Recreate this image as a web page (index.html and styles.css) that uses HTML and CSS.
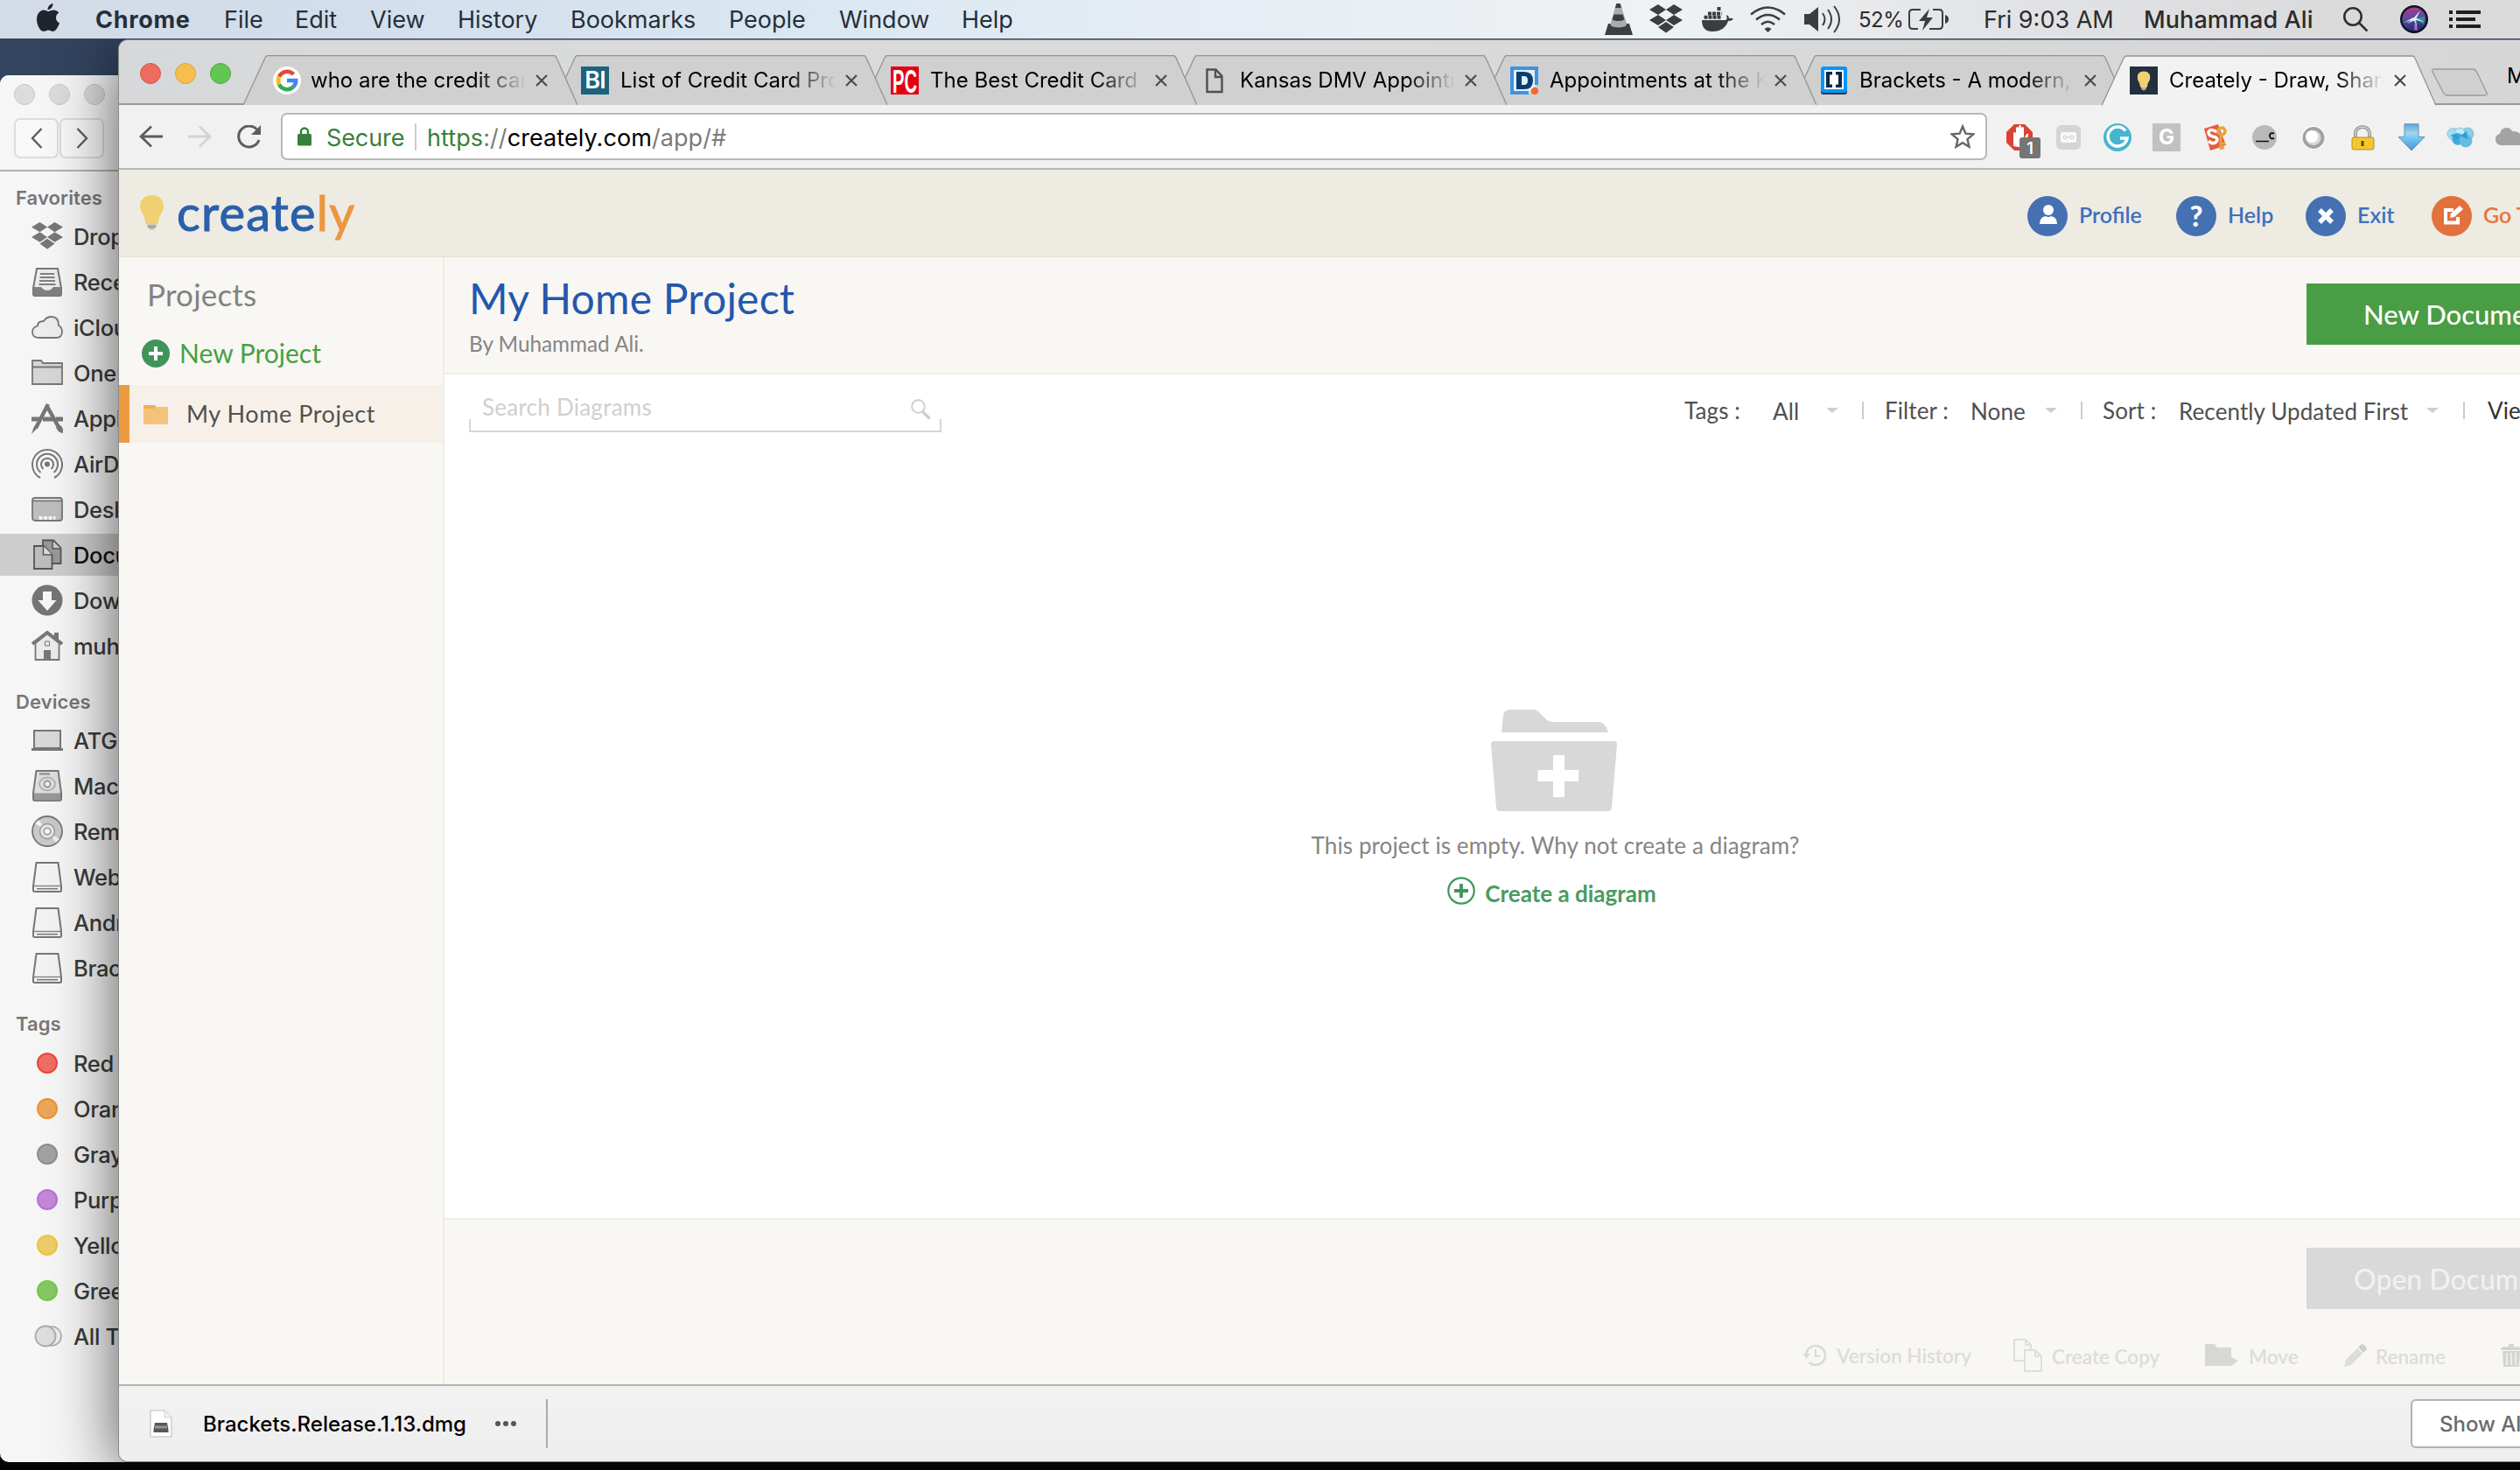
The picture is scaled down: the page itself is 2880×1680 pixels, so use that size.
FILE: index.html
```html
<!DOCTYPE html>
<html lang="en">
<head>
<meta charset="utf-8">
<title>Creately - Draw, Share</title>
<link rel="stylesheet" href="styles.css">
</head>
<body>
<svg width="0" height="0" class="defs">
  <defs>
    <symbol id="dropbox" viewBox="0 0 38 34"><path d="M10 0l9 6-9 6-10-6zM28 0l10 6-10 6-9-6zM0 18l10-6 9 6-9 6zM38 18l-10-6-9 6 9 6zM19 20l9 6-9 6.500-9-6.500z" fill="currentColor"/></symbol>
    <symbol id="disk" viewBox="0 0 36 36"><path d="M5.500 2h25l3.500 26.500v5q0 1.500-2 1.500H4q-2 0-2-1.500v-5z" fill="#f2f2f2" fill-opacity=".7" stroke="#777" stroke-width="2"/><path d="M3 28.500h30" stroke="#888" stroke-width="1.500"/><path d="M6 31.700h24" stroke="#777" stroke-width="1.500"/></symbol>
    <symbol id="tab" viewBox="0 0 382 57"><path d="M0 57L25 3q1-2.500 3-2.500H355q2 0 3 2.500L382 57z" fill="currentColor"/><path d="M0 57L25 3q1-2.500 3-2.500H355q2 0 3 2.500L382 57" fill="none" stroke="#939393" stroke-width="1.300"/></symbol>
    <symbol id="close" viewBox="0 0 14 14"><path d="M1 1l12 12M13 1L1 13" stroke="#4c4c4c" stroke-width="2.200"/></symbol>
    <symbol id="bulb" viewBox="0 0 27 40"><path d="M13.500 0C6 0 0 5 0 12.500c0 7 5 9 6 18 .3 2.500 1.300 3 2.500 3h10c1.200 0 2.200-.5 2.500-3 1-9 6-11 6-18C27 5 21 0 13.500 0z" fill="#f1cf73"/><path d="M8.500 33.500h10v2.500l-3 3.500h-4l-3-3.500z" fill="#b9b9b4"/><path d="M8.500 36h10" stroke="#888" stroke-width=".8"/></symbol>
  </defs>
</svg>

<header class="menubar">
  <svg class="apple" width="26" height="33" viewBox="0 0 26 33"><path d="M18.500 0c.3 3.600-2.900 7.300-6 7.200C12.200 3.700 15.300.4 18.500 0z" fill="#20242d"/><path d="M13 9c1.500 0 3.500-1.600 6.300-1.600 2.300 0 4.600 1.200 5.900 3.200-4.800 2.900-4.100 9.800.8 11.800-.9 2.600-3.900 9.200-7.100 9.400-2.300.1-3-1.400-5.600-1.400s-3.500 1.400-5.600 1.400C3.500 31.700 0 24 0 18.300 0 11.500 4 7.600 7.900 7.500 10.300 7.500 12 9 13 9z" fill="#20242d"/></svg>
  <nav class="menus"><b>Chrome</b><span>File</span><span>Edit</span><span>View</span><span>History</span><span>Bookmarks</span><span>People</span><span>Window</span><span>Help</span></nav>
  <div class="status">
    <svg width="32" height="36" viewBox="0 0 32 36"><path d="M13 0h5l9.500 31h-23z" fill="#a9abad"/><path d="M13.500 0h4l1.500 5h-7zM10.500 12.500h10l2 6q-7 3-14 0z" fill="#3c3d3f"/><path d="M4 23h2.500q-1 4 9.500 4.500Q26 27 25 23h3l4 13H0z" fill="#3c3d3f"/></svg>
    <svg width="38" height="34" class="s-drop"><use href="#dropbox"/></svg>
    <svg width="36" height="28" viewBox="0 0 36 28" class="s-dock"><path d="M0 15h27q2.500-.5 1-6 3 1 3 4 3-.6 5 .5-1.500 2.500-6 2.500Q26 28 12 28 0 28 0 15z" fill="#3c3d3f"/><path d="M2.500 11.700h20M7 7.400h15.500M17.500 2h4" stroke="#3c3d3f" stroke-width="4" stroke-dasharray="4 1"/></svg>
    <svg width="41" height="30" viewBox="0 0 41 30" class="s-wifi" fill="none" stroke="#3c3d3f" stroke-width="2.600"><path d="M1 9.500q19.500-16 39 0M7 15.500q13.500-11 27 0M13 21q7.500-6.500 15 0"/><path d="M16.500 26q4-3.500 8 0l-4 4z" fill="#3c3d3f" stroke="none"/></svg>
    <svg width="41" height="32" viewBox="0 0 41 32" class="s-vol"><path d="M0 10h6l10-8v28L6 22H0z" fill="#3c3d3f"/><path d="M21 9q5 7 0 14M27 5q8 11 0 22M34 1q12 15 0 30" fill="none" stroke="#3c3d3f" stroke-width="2"/></svg>
    <span class="pct">52%</span>
    <svg width="46" height="26" viewBox="0 0 46 26" class="s-bat"><path d="M14 2H5Q1 2 1 6v14q0 4 4 4h6M28 2h7q4 0 4 4v14q0 4-4 4H24" fill="none" stroke="#3c3d3f" stroke-width="2"/><path d="M42 8q4 1 4 5t-4 5z" fill="#3c3d3f"/><path d="M24 1L12 15h7l-3 11 12-15h-7z" fill="#3c3d3f"/></svg>
    <span class="clock">Fri 9:03 AM</span>
    <span class="user">Muhammad Ali</span>
    <svg width="28" height="28" viewBox="0 0 28 28" class="s-find" fill="none" stroke="#2e2e2e" stroke-width="2.600"><circle cx="11" cy="11" r="9.700"/><path d="M18 18l9.500 9.500"/></svg>
    <svg width="32" height="32" viewBox="0 0 32 32" class="s-siri"><defs><linearGradient id="sg" x1=".4" y1="0" x2=".6" y2="1"><stop offset="0" stop-color="#b8368f"/><stop offset=".45" stop-color="#5b4a9c"/><stop offset="1" stop-color="#142a6c"/></linearGradient></defs><circle cx="16" cy="16" r="14.800" fill="url(#sg)" stroke="#0d1222" stroke-width="2.400"/><path d="M17 15l11-2-1 9z" fill="#1fbf9e" opacity=".65"/><path d="M4 20l10-5.500 2-.5L23 6l-4.500 9L28 19l-10-2 1.500 10-3.500-9.500L8 21l5-4z" fill="#d6f6f8"/><path d="M17 17l3 12-4-1z" fill="#d86fc0" opacity=".8"/></svg>
    <svg width="36" height="20" viewBox="0 0 36 20" class="s-list"><path d="M0 2h4M8 2h28M0 10h4M8 10h22M0 18h4M8 18h28" stroke="#1e1e1e" stroke-width="4"/></svg>
  </div>
</header>

<section class="finder">
  <div class="f-top">
    <div class="f-lights"><i></i><i></i><i></i></div>
    <div class="f-nav"><span><svg width="14" height="24" viewBox="0 0 14 24"><path d="M12.500 1L2 12l10.500 11" fill="none" stroke="#5c5c5c" stroke-width="2.400"/></svg></span><span><svg width="14" height="24" viewBox="0 0 14 24"><path d="M1.500 1L12 12 1.500 23" fill="none" stroke="#5c5c5c" stroke-width="2.400"/></svg></span></div>
  </div>
  <h4>Favorites</h4>
  <ul>
    <li><svg viewBox="0 0 38 34"><use href="#dropbox"/></svg>Dropbox</li>
    <li><svg viewBox="0 0 36 36"><path d="M6 3h24l4 22v7q0 2-2 2H4q-2 0-2-2v-7z" fill="#ececec" stroke="#777" stroke-width="2"/><path d="M2 24h9q3 4 7 4t7-4h9v8q0 2-2 2H4q-2 0-2-2z" fill="#808080"/><path d="M10 9h16M9.500 13h17M9 17h18M8.500 21h19" stroke="#808080" stroke-width="1.800"/></svg>Recents</li>
    <li><svg viewBox="0 0 36 36"><path d="M9 30Q1 30 1 23.500 1 18 7 16.500 7 11 14 11 17 6 23 6q8 0 8 10 4 2 4 7 0 7-7 7z" fill="#ededed" stroke="#777" stroke-width="1.800"/></svg>iCloud Drive</li>
    <li><svg viewBox="0 0 36 36"><path d="M1 31V4h10l2 3h22v24z" fill="#d6d6d6" stroke="#777" stroke-width="1.800"/><path d="M1 11.500h34" stroke="#777" stroke-width="1.800"/></svg>OneDrive</li>
    <li><svg viewBox="0 0 36 36"><path d="M0 19h9M13 19h12M28 19h8" stroke="#777" stroke-width="5"/><path d="M19 2L5 29M17 3l14 25" stroke="#777" stroke-width="4.500"/><path d="M3 27l4 2-7 7zM28 28l5-2q4 3 3 9-6 0-8-7z" fill="#777"/></svg>Applications</li>
    <li><svg viewBox="0 0 36 36" fill="none" stroke="#777" stroke-width="2"><path d="M10 34a17 17 0 1 1 16 0M10.500 28a12 12 0 1 1 15 0M13.500 24a7 7 0 1 1 9 0"/><circle cx="18" cy="18.500" r="2" fill="#777"/></svg>AirDrop</li>
    <li><svg viewBox="0 0 36 36"><rect x="1" y="5" width="34" height="26" rx="3" fill="#bdbdbd" stroke="#777" stroke-width="1.800"/><path d="M2 8.500h32" stroke="#777" stroke-width="1.500"/><path d="M3 6.700h30" stroke="#eee"/><path d="M8.500 28h19" stroke="#f4f4f4" stroke-width="4" stroke-dasharray="4 1.500"/></svg>Desktop</li>
    <li class="sel"><svg viewBox="0 0 36 36"><path d="M13 1.500h12l8.500 8.500V28H13z" fill="#999" stroke="#555" stroke-width="1.800"/><path d="M24 2v9h9.500" fill="#ccc" stroke="#555" stroke-width="1.500"/><path d="M3 8h11l9.500 10v16H3z" fill="#bdbdbd" stroke="#555" stroke-width="1.800"/><path d="M13.500 8v10h10" fill="#ddd" stroke="#555" stroke-width="1.500"/></svg>Documents</li>
    <li><svg viewBox="0 0 36 36"><circle cx="18" cy="18" r="17.500" fill="#757575"/><path d="M13 8h10v10h5.500L18 30 7.500 18H13z" fill="#f7f7f7"/></svg>Downloads</li>
    <li><svg viewBox="0 0 36 36"><path d="M4.500 15v19h27V15L18 4z" fill="#ebebeb" stroke="#777" stroke-width="1.800"/><path d="M1 16L18 3l17 13" fill="none" stroke="#777" stroke-width="4"/><path d="M26 3h5v9l-5-4zM14 23h8v11h-8z" fill="#777"/><path d="M15.500 13h5v5h-5z" fill="none" stroke="#777"/></svg>muhammadali</li>
  </ul>
  <h4>Devices</h4>
  <ul>
    <li><svg viewBox="0 0 36 36"><path d="M3 7h30v20H3z" fill="#d9d9d9" stroke="#777" stroke-width="2"/><path d="M0 28.500h36" stroke="#777" stroke-width="3"/></svg>ATG</li>
    <li><svg viewBox="0 0 36 36"><path d="M5.500 1h25l3.500 25v7q0 2-2 2H4q-2 0-2-2v-7z" fill="#dedede" stroke="#777" stroke-width="2"/><path d="M3 26.500h30v8H3z" fill="#999"/><ellipse cx="18" cy="16" rx="9" ry="7.500" fill="none" stroke="#b5b5b5" stroke-width="2"/><circle cx="18" cy="16" r="3.500" fill="#eee" stroke="#888" stroke-width="1.500"/><path d="M9 4.500h12" stroke="#888" stroke-width="2"/></svg>Macintosh HD</li>
    <li><svg viewBox="0 0 36 36"><circle cx="18" cy="18" r="17" fill="#c9c9c9" stroke="#777" stroke-width="1.800"/><path d="M18 18L4 9l4-4zM18 18l14 9-4 4z" fill="#f0f0f0"/><circle cx="18" cy="18" r="8.500" fill="#e6e6e6" stroke="#999" stroke-width="1.500"/><circle cx="18" cy="18" r="3.800" fill="#f5f5f5" stroke="#999" stroke-width="1.500"/></svg>Remote Disc</li>
    <li><svg><use href="#disk"/></svg>WebStorm</li>
    <li><svg><use href="#disk"/></svg>Android Studio</li>
    <li><svg><use href="#disk"/></svg>Brackets</li>
  </ul>
  <h4>Tags</h4>
  <ul>
    <li><i class="tag red"></i>Red</li>
    <li><i class="tag orange"></i>Orange</li>
    <li><i class="tag gray"></i>Gray</li>
    <li><i class="tag purple"></i>Purple</li>
    <li><i class="tag yellow"></i>Yellow</li>
    <li><i class="tag green"></i>Green</li>
    <li><svg viewBox="0 0 36 36"><circle cx="23" cy="18" r="11" fill="#ededed" stroke="#aaa" stroke-width="1.600"/><circle cx="16" cy="18" r="11.500" fill="#dedede" stroke="#aaa" stroke-width="1.800"/></svg>All Tags…</li>
  </ul>
</section>

<main class="chrome">
  <div class="tabstrip">
    <div class="lights"><i></i><i></i><i></i></div>
    <div class="tabs">
      <div class="tab t1"><svg class="shape"><use href="#tab"/></svg><svg class="fav" viewBox="0 0 32 32"><circle cx="16" cy="16" r="16" fill="#fff"/><g fill="none" stroke-width="4.500"><path d="M23.500 9A10.200 10.200 0 0 0 7 11.500" stroke="#ea4335"/><path d="M7 11.500a10.200 10.200 0 0 0 0 9" stroke="#fbbc05"/><path d="M7 20.500a10.200 10.200 0 0 0 16 3" stroke="#34a853"/><path d="M23 23.500q3.300-3 3.200-7.500H16" stroke="#4285f4"/></g></svg><span>who are the credit car</span><svg class="x"><use href="#close"/></svg></div>
      <div class="tab t2"><svg class="shape"><use href="#tab"/></svg><b class="fav bi">BI</b><span>List of Credit Card Pro</span><svg class="x"><use href="#close"/></svg></div>
      <div class="tab t3"><svg class="shape"><use href="#tab"/></svg><svg class="fav" viewBox="0 0 32 32"><path d="M0 0h32v32H0z" fill="#e3000f"/><text x="2" y="29.500" textLength="28" lengthAdjust="spacingAndGlyphs" class="pc">PC</text></svg><span>The Best Credit Card</span><svg class="x"><use href="#close"/></svg></div>
      <div class="tab t4"><svg class="shape"><use href="#tab"/></svg><svg class="fav" viewBox="0 0 32 32"><path d="M7.500 3.500h10l7 7.500v18h-17z M17 3.500V12h7.500" fill="none" stroke="#505050" stroke-width="2.400"/></svg><span>Kansas DMV Appointm</span><svg class="x"><use href="#close"/></svg></div>
      <div class="tab t5"><svg class="shape"><use href="#tab"/></svg><svg class="fav" viewBox="0 0 32 32"><path d="M30 21V2H2v28h19" fill="#e6eef7" stroke="#3f94e2" stroke-width="4"/><path fill-rule="evenodd" d="M7 6h9q10 0 10 10t-10 10H7zm6 5v10h3q4 0 4-5t-4-5z" fill="#063f75"/><circle cx="28" cy="28" r="4.300" fill="#f9682a"/></svg><span>Appointments at the K</span><svg class="x"><use href="#close"/></svg></div>
      <div class="tab t6"><svg class="shape"><use href="#tab"/></svg><svg class="fav" viewBox="0 0 32 32"><rect x="1" y="2" width="30" height="30" rx="3" fill="#333"/><rect x="1" y="0" width="30" height="30" rx="3" fill="#0795fa"/><path d="M5 4h22v22H5z" fill="#fff"/><path d="M14 6H7v18h7v-3.500h-3v-11h3zM18 6h7v18h-7v-3.500h3v-11h-3z" fill="#0a2a45"/></svg><span>Brackets - A modern,</span><svg class="x"><use href="#close"/></svg></div>
      <div class="tab t7"><svg class="shape"><use href="#tab"/></svg><svg class="fav" viewBox="0 0 32 32"><path d="M0 0h32v32H0z" fill="#22303f"/><svg x="8.500" y="5" width="15" height="23"><use href="#bulb"/></svg></svg><span>Creately - Draw, Share</span><svg class="x"><use href="#close"/></svg></div>
    </div>
    <svg class="newtab" width="66" height="32" viewBox="0 0 66 32"><path d="M4 1h44q3 0 4.500 3L64 28q1 3-2 3H19q-3 0-4.500-3L2 4q-1-3 2-3z" fill="#d0d0d0" stroke="#9a9a9a" stroke-width="1.300"/></svg>
    <span class="person">M</span>
  </div>

  <div class="toolbar">
    <svg class="nav-b" width="27" height="26" viewBox="0 0 27 26"><path d="M14 1.500L2 13l12 11.500M2 13h25" fill="none" stroke="#5a5d61" stroke-width="2.800"/></svg>
    <svg class="nav-f" width="27" height="26" viewBox="0 0 27 26"><path d="M13 1.500L25 13 13 24.500M25 13H0" fill="none" stroke="#d3d3d3" stroke-width="2.800"/></svg>
    <svg class="nav-r" width="28" height="27" viewBox="0 0 28 27"><path d="M23.500 6A12 12 0 1 0 25 17" fill="none" stroke="#5a5d61" stroke-width="3"/><path d="M27 0v11H16z" fill="#5a5d61"/></svg>
    <div class="omni">
      <svg class="lock" width="16" height="22" viewBox="0 0 16 22"><rect y="8" width="16" height="13.500" rx="1.500" fill="#37803c"/><path d="M4 9V5.500a4 4 0 0 1 8 0V9" fill="none" stroke="#37803c" stroke-width="2.400"/></svg>
      <span class="secure">Secure</span><i class="bar"></i>
      <span class="url"><em>https</em>://<b>creately.com</b>/app/#</span>
      <svg class="star" width="28" height="28" viewBox="0 0 28 28"><path d="M14 2.500l3.400 8.200 8.800.7-6.700 5.800 2 8.600L14 21.200l-7.500 4.600 2-8.600-6.700-5.800 8.800-.7z" fill="none" stroke="#63666a" stroke-width="2.400"/></svg>
    </div>
    <div class="exts">
      <div class="ext"><svg viewBox="0 0 32 32"><path d="M10 1h12l9 9v12l-9 9H10l-9-9V10z" fill="#dc4234"/><path d="M9 26V12q0-2 1.500-2T12 12V6q0-2 1.300-2T15 6V4q0-2 1.500-2T18 4v2q0-2 1.500-2T21 6v12l3-6q3-1 2 2l-5 14z" fill="#fff"/></svg><b class="badge">1</b></div>
      <div class="ext"><svg viewBox="0 0 32 32"><rect x="2" y="2" width="28" height="28" rx="6" fill="#d4d4d4"/><rect x="7" y="10" width="18" height="12" rx="2" fill="#f8f8f8"/><circle cx="12" cy="16" r="2" fill="none" stroke="#ccc"/><circle cx="20" cy="16" r="2" fill="none" stroke="#ccc"/><path d="M14 16h4" stroke="#ccc"/></svg></div>
      <div class="ext"><svg viewBox="0 0 32 32"><circle cx="16" cy="16" r="16" fill="#46b5cf"/><path d="M25 8.500A11 11 0 1 0 27 17h-8" fill="none" stroke="#fff" stroke-width="3.500"/></svg></div>
      <div class="ext"><b class="gsq">G</b></div>
      <div class="ext"><svg viewBox="0 0 32 32"><path d="M3 6L19 1l9 24-18 6z" fill="#e55b43"/><path d="M18 10q-8-5-10 0 0 4 5 5 7 1 4 6-4 4-9-1" fill="none" stroke="#fff" stroke-width="3.600"/><circle cx="23" cy="9" r="4" fill="none" stroke="#e6a33b" stroke-width="3.500"/><path d="M22 13v17M22 23h5M22 28h4" stroke="#e6a33b" stroke-width="3"/></svg></div>
      <div class="ext"><svg viewBox="0 0 32 32"><circle cx="16" cy="16" r="14" fill="#b9b9b9"/><path d="M6 20.500h15" stroke="#111" stroke-width="1.600"/><path d="M27 11.500q-5-1.500-5 2.500 0 4.500 5 3" fill="none" stroke="#111" stroke-width="1.900"/></svg></div>
      <div class="ext"><svg viewBox="0 0 32 32"><circle cx="16" cy="16.500" r="13.500" fill="#fff"/><circle cx="16" cy="16.500" r="10.500" fill="#d8d8d8" stroke="#a2a2a2" stroke-width="4"/><circle cx="14" cy="15" r="7" fill="#fff"/></svg></div>
      <div class="ext"><svg viewBox="0 0 32 32"><path d="M8 18V11a8 7 0 0 1 16 0v7" fill="none" stroke="#9a9a9a" stroke-width="4"/><path d="M8 18V11a8 7 0 0 1 16 0v7" fill="none" stroke="#ececec" stroke-width="1"/><rect x="4" y="16" width="25" height="14" rx="2" fill="#f4c72c" stroke="#b88f18"/><path d="M16 20v6" stroke="#5a4a12" stroke-width="3"/></svg></div>
      <div class="ext"><svg viewBox="0 0 32 32"><defs><linearGradient id="dl" x1="0" y1="0" x2="0" y2="1"><stop offset="0" stop-color="#5fa7d8"/><stop offset=".35" stop-color="#a3d3ee"/><stop offset=".6" stop-color="#6ac0f2"/><stop offset="1" stop-color="#4d95c6"/></linearGradient></defs><path d="M8 .7h16V15.500h7L16 31 1 15.500h7z" fill="url(#dl)" stroke="#5a96be"/></svg></div>
      <div class="ext"><svg viewBox="0 0 32 32"><g stroke="#6bb8dc" stroke-width=".8"><circle cx="7.500" cy="12" r="6.500" fill="#a8dcf1"/><circle cx="24" cy="12" r="7" fill="#8ccdea"/><circle cx="15" cy="11" r="6" fill="#c3e8f6"/><circle cx="13" cy="18" r="6.500" fill="#3aaadb"/><circle cx="22" cy="20" r="7" fill="#61bde2"/></g><path d="M4 14l8-3 2 7zM16 14l7-5 1 9z" fill="#2a9fd3"/></svg></div>
      <div class="ext"><svg viewBox="0 0 32 32"><path d="M6 25q-6-1-6-7 0-5 5-6 1-7 8-7 4 0 6 4 8-1 11 6l2 10z" fill="#a3a3a3"/></svg></div>
    </div>
  </div>

  <div class="brandbar">
    <svg class="logo-bulb" width="27" height="40"><use href="#bulb"/></svg>
    <div class="wordmark"><span>create</span><em>ly</em></div>
    <nav class="links">
      <a class="l1"><svg viewBox="0 0 46 46"><circle cx="23" cy="23" r="23" fill="#4571b3"/><circle cx="24" cy="16" r="6" fill="#fff"/><path d="M14 32q0-8 7-9 3 2 6 0 7 1 7 9z" fill="#fff"/></svg>Profile</a>
      <a class="l2"><i class="q">?</i>Help</a>
      <a class="l3"><svg viewBox="0 0 46 46"><circle cx="23" cy="23" r="23" fill="#4571b3"/><path d="M16 16l14 14M30 16L16 30" stroke="#fff" stroke-width="5.500"/></svg>Exit</a>
      <a class="l4"><svg viewBox="0 0 46 46"><circle cx="23" cy="23" r="23" fill="#e2713c"/><path d="M25 16H16v14.500h14V24" fill="none" stroke="#fff" stroke-width="4"/><path d="M21 25l1-5 10-9 4 4-10 9z" fill="#fff"/></svg>Go To</a>
    </nav>
  </div>

  <div class="app">
    <aside class="projects">
      <h2>Projects</h2>
      <div class="newproj"><svg width="32" height="32" viewBox="0 0 32 32"><circle cx="16" cy="16" r="16" fill="#40945b"/><path d="M8 16h16M16 8v16" stroke="#fff" stroke-width="4"/></svg><span>New Project</span></div>
      <div class="proj"><svg width="28" height="24" viewBox="0 0 28 24"><path d="M0 2h14v2h14v20H0z" fill="#f5c27a"/><path d="M0 2h13l1 2-1 2H0z" fill="#efae54"/></svg><span>My Home Project</span></div>
    </aside>
    <section class="content">
      <div class="head"><div><h1>My Home Project</h1><p>By Muhammad Ali.</p></div><button class="new">New Document</button></div>
      <div class="filters">
        <div class="search"><span>Search Diagrams</span><svg width="23" height="24" viewBox="0 0 23 24" fill="none" stroke="#cfcfcf"><circle cx="8.500" cy="8.500" r="7.300" stroke-width="2"/><path d="M13.500 14.500l8 8" stroke-width="3.500"/></svg></div>
        <div class="opts"><span>Tags :</span><span class="v">All</span><i class="car"></i><i class="sep"></i><span>Filter :</span><span class="v">None</span><i class="car"></i><i class="sep"></i><span>Sort :</span><span class="v">Recently Updated First</span><i class="car"></i><i class="sep"></i><span class="view">View :</span></div>
      </div>
      <div class="empty">
        <svg width="144" height="116" viewBox="0 0 144 116" fill="#d8d8d8"><path d="M12 26L14 6q1-6 7-6h27q5 0 9 5l7 7q3 2 7 2h51q9 0 12 12z"/><path fill-rule="evenodd" d="M4 36h136q4 0 4 4l-6 72q-.5 4-4 4H10q-3.500 0-4-4L0 40q0-4 4-4zm67 16v17H53.500v13H71v18h13V82h16V69H84V52z"/></svg>
        <p>This project is empty. Why not create a diagram?</p>
        <a><svg width="32" height="32" viewBox="0 0 32 32"><circle cx="16" cy="16" r="14.700" fill="none" stroke="#3f965c" stroke-width="2.200"/><path d="M8 16h16M16 8v16" stroke="#3f965c" stroke-width="3.800"/></svg><span>Create a diagram</span></a>
      </div>
      <div class="foot">
        <button class="open">Open Document</button>
        <div class="acts">
          <svg class="a1" width="28" height="26" viewBox="0 0 28 26"><path d="M4 13a11 11 0 1 1 3.500 8" fill="none" stroke="#d9d9d7" stroke-width="2.500"/><path d="M0 11h9l-4.500 6z" fill="#d9d9d7"/><path d="M15 6v8h5" fill="none" stroke="#d9d9d7" stroke-width="2.200"/></svg><span class="b1">Version History</span>
          <svg class="a2" width="34" height="38" viewBox="0 0 34 38" fill="none" stroke="#dededc" stroke-width="2"><path d="M12 25H1V1h13l6 6v5M14 1v6h6M13 13h12l7 7v17H13zM25 13v7h7"/></svg><span class="b2">Create Copy</span>
          <svg class="a3" width="38" height="26" viewBox="0 0 38 26"><path d="M0 0h11l3 4h16v11l8 4-8 6H0z" fill="#d7d7d6"/></svg><span class="b3">Move</span>
          <svg class="a4" width="26" height="26" viewBox="0 0 26 26"><path d="M0 26l2-8L15 5l6 6L8 24z" fill="#dcdcda"/><path d="M16 4l4-4q5 1 6 6l-4 4z" fill="#cfcfce"/></svg><span class="b4">Rename</span>
          <svg class="a5" width="24" height="26" viewBox="0 0 24 26"><path d="M0 5q0-2 9-2V0h6v3q9 0 9 2v2H0zM2 8h20l-1 18H3z" fill="#d4d4d3"/><path d="M7 10v14M12 10v14M17 10v14" stroke="#f4f3ef" stroke-width="1.500"/></svg>
        </div>
      </div>
    </section>
  </div>

  <div class="downloads">
    <svg width="26" height="32" viewBox="0 0 26 32"><path d="M1 1h16l8 8v22H1z" fill="#fff" stroke="#cfcfcf" stroke-width="1.500"/><path d="M17 1v8h8" fill="#f2f2f2" stroke="#d0d0d0"/><path d="M6 15h14l1.500 8v3h-17v-3z" fill="#55595c"/><path d="M6 20h14" stroke="#8f979b" stroke-width="3"/></svg>
    <span class="file">Brackets.Release.1.13.dmg</span>
    <span class="dots"><i></i><i></i><i></i></span>
    <i class="vbar"></i>
    <button class="showall">Show All</button>
  </div>
</main>
</body>
</html>
```
FILE: styles.css
```css
* { box-sizing: border-box; margin: 0; padding: 0; }
body { position: relative; width: 2880px; height: 1680px; overflow: hidden; background: linear-gradient(#33445f 0, #33445f 200px, #050505 1400px); font-family: Inter, "Liberation Sans", sans-serif; white-space: nowrap; }
svg { display: block; flex: none; }
i, em { font-style: normal; }
.defs { position: absolute; }

.menubar { position: relative; z-index: 5; display: flex; align-items: center; height: 44px; padding-left: 42px; background: linear-gradient(90deg, #d3dbe6 0, #d2deec 400px, #d9e7f1 900px, #e3ebf4 1250px, #eff2f3 1900px, #e2e3e6 2300px, #dadadb 2700px, #dadada 100%); color: #252f3a; font-size: 27px; }
.apple { position: relative; top: -2px; }
.menus { flex: none; display: grid; grid-template-columns: 147px 81px 86px 100px 129px 181px 126px 140px 100px; width: 1090px; margin-left: 41px; }
.menus b { letter-spacing: .7px; }
.status { display: flex; align-items: center; margin-left: 635px; color: #2b2b2c; }
.s-drop { color: #3c3d3f; margin-left: 19px; }
.s-dock { margin-left: 22px; }
.s-wifi { margin-left: 19px; }
.s-vol { margin-left: 21px; }
.pct { width: 57px; margin-left: 21px; font-size: 24px; letter-spacing: -.5px; }
.clock { width: 183px; margin-left: 40px; }
.user { width: 228px; font-weight: 500; letter-spacing: .1px; }
.s-siri { margin-left: 37px; }
.s-list { margin-left: 24px; }

.finder { position: absolute; left: 0; top: 86px; width: 400px; height: 1585px; border-radius: 10px; background: #f6f6f6; color: #3b3b3b; overflow: hidden; }
.f-top { height: 110px; padding: 10px 16px 0; border-bottom: 2px solid #b1b1b1; background: #f6f6f6; }
.f-lights { display: flex; gap: 16px; }
.f-lights i { width: 24px; height: 24px; border-radius: 50%; background: #dcdcdc; border: 1px solid #c6c6c6; }
.f-nav { display: flex; gap: 1px; margin-top: 15px; }
.f-nav span { width: 51px; height: 46px; border: 2px solid #dcdcdc; border-radius: 7px; background: #f8f8f8; display: grid; place-items: center; }
.finder h4 { height: 30px; line-height: 30px; padding-left: 18px; margin-top: 15px; font-size: 22px; font-weight: 600; color: #777; letter-spacing: .1px; }
.finder ul { list-style: none; margin-top: 5px; }
.finder li { display: flex; align-items: center; height: 48px; margin-bottom: 4px; padding-left: 36px; font-size: 25.500px; font-weight: 500; letter-spacing: -.3px; }
.finder ul + h4 { margin-top: 25px; }
.finder ul:last-child { margin-top: 6px; }
.finder li svg { width: 36px; height: 36px; margin-right: 12px; color: #777; }
.finder .sel { background: #cdcdcd; color: #111; }
.tag { width: 24px; height: 24px; margin: 0 18px 0 6px; border: 2px solid; border-radius: 50%; }
.red { background: #ee6e64; border-color: #e9493c; }
.orange { background: #eca65a; border-color: #ea9333; }
.gray { background: #a2a2a4; border-color: #8e8e91; }
.purple { background: #c487dc; border-color: #b96fd6; }
.yellow { background: #eccd68; border-color: #edc63b; }
.green { background: #86c765; border-color: #72c94c; }

.chrome { position: absolute; left: 136px; top: 46px; width: 2800px; height: 1624px; display: flex; flex-direction: column; border-radius: 10px; background: #f1f1f1; box-shadow: 0 0 0 1px #8b8b8b, 0 12px 76px rgba(0,0,0,.68); clip-path: inset(-1px 0 -1px -140px); overflow: hidden; }
.tabstrip { flex: none; display: flex; height: 74px; background: linear-gradient(90deg, #d6d8da, #d9dadb 600px, #dadada 1400px, #d6d6d6); border-bottom: 2px solid #999; }
.lights { flex: none; display: flex; gap: 16px; padding: 26px 0 0 24px; width: 145px; }
.lights i { width: 24px; height: 24px; border-radius: 50%; background: #ed6b60; border: 1px solid #d5554b; }
.lights i:nth-child(2) { background: #f5be4f; border-color: #d9a33e; }
.lights i:nth-child(3) { background: #61c654; border-color: #4fa73f; }
.tabs { flex: none; display: flex; height: 57px; margin-top: 17px; margin-left: -3px; }
.tab { flex: none; position: relative; display: flex; align-items: flex-start; width: 382px; height: 57px; margin-right: -28px; padding: 13px 0 0 32px; }
.shape { position: absolute; left: 0; top: 0; width: 382px; height: 57px; color: #d0d0d0; }
.t1 { z-index: 6; } .t2 { z-index: 5; } .t3 { z-index: 4; } .t4 { z-index: 3; } .t5 { z-index: 2; } .t6 { z-index: 1; }
.t7 { z-index: 8; height: 58px; }
.t7 .shape { color: #f2f2f2; height: 58px; }
.fav { position: relative; flex: none; width: 32px; height: 32px; text-align: center; line-height: 32px; }
.t1 .fav { left: 2px; }
.bi { background: #1c637e; color: #fff; font-size: 27px; font-weight: 600; letter-spacing: -1px; }
.pc { fill: #fff; font: 700 37px "Liberation Sans", sans-serif; }
.tab span { position: relative; flex: none; width: 247px; height: 32px; margin-left: 13px; line-height: 32px; font-size: 24px; color: #000; overflow: hidden; -webkit-mask-image: linear-gradient(90deg, #000 190px, transparent 246px); mask-image: linear-gradient(90deg, #000 190px, transparent 246px); }
.tab .x { position: relative; width: 14px; height: 14px; margin: 9px 0 0 10px; }
.newtab { margin: 32px 0 0 22px; }
.person { margin: 27px 0 0 21px; font-size: 24px; line-height: 28px; }

.toolbar { flex: none; display: flex; align-items: flex-start; height: 74px; border-bottom: 2px solid #b5b5b5; background: #f1f1f1; padding-top: 9px; }
.nav-b { margin: 14px 0 0 23px; }
.nav-f { margin: 14px 0 0 29px; }
.nav-r { margin: 14px 0 0 29px; }
.omni { flex: none; display: flex; align-items: center; width: 1950px; height: 54px; margin-left: 22px; border: 2px solid #b8b8b8; border-radius: 7px; background: #fff; font-size: 27px; }
.omni span { position: relative; top: 1px; }
.lock { margin-left: 17px; }
.secure { width: 101px; margin-left: 17px; color: #37803c; letter-spacing: -.1px; }
.bar { width: 2px; height: 31px; background: #ccc; }
.url { margin-left: 12px; flex: 1; color: #7b7b7b; letter-spacing: .08px; }
.url em { color: #37803c; }
.url b { color: #000; font-weight: 400; }
.star { margin-right: 12px; }
.exts { display: flex; gap: 24px; margin: 12px 0 0 21px; }
.ext { flex: none; position: relative; width: 32px; height: 32px; }
.ext svg { width: 32px; height: 32px; }
.badge { position: absolute; left: 16px; top: 16px; width: 24px; height: 24px; border-radius: 3px; background: #757575; color: #fff; font: 600 18px/25px Inter, sans-serif; text-align: center; }
.gsq { display: block; height: 32px; background: #c1c1c1; color: #fff; font-size: 24px; line-height: 32px; text-align: center; }

.brandbar { flex: none; display: flex; align-items: flex-start; height: 100px; background: #eeebe3; border-bottom: 2px solid #e8e2d5; font-family: Lato, sans-serif; }
.logo-bulb { margin: 29px 0 0 24px; }
.wordmark { flex: none; width: 2115px; margin-left: 15px; margin-top: 17px; font-size: 56px; line-height: 64px; letter-spacing: 1.2px; color: #2a5fab; -webkit-text-stroke: 1px #2a5fab; }
.wordmark em { color: #ec973f; -webkit-text-stroke-color: #ec973f; }
.links { flex: none; display: flex; margin-top: 30px; }
.links a { display: flex; align-items: flex-start; color: #4070bd; font-size: 25px; font-weight: 600; line-height: 43px; }
.links svg, .q { flex: none; width: 46px; height: 46px; margin-right: 13px; }
.q { border-radius: 50%; background: #4571b3; color: #fff; text-align: center; font: 900 32px/46px Lato, sans-serif; }
.l1 { width: 170px; } .l2 { width: 148px; } .l3 { width: 144px; }
.links .l4 { color: #e8743d; }

.app { flex: none; display: flex; height: 1288px; font-family: Lato, sans-serif; }
.projects { flex: none; width: 372px; border-right: 2px solid #efece6; background: #f8f7f3; }
.projects h2 { margin: 21px 0 0 32px; line-height: 42px; font-size: 35px; font-weight: 400; color: #828282; letter-spacing: .2px; }
.newproj { display: flex; align-items: center; height: 40px; margin: 27px 0 0 26px; gap: 11px; font-size: 30px; color: #47a044; }
.newproj span { position: relative; top: -1px; }
.proj { display: flex; align-items: center; height: 66px; margin-top: 16px; padding-left: 16px; border-left: 12px solid #ec9b43; background: #f6f0e9; font-size: 27px; letter-spacing: .55px; color: #505050; }
.proj span { position: relative; top: -1px; margin-left: 21px; }
.content { flex: none; width: 2428px; display: flex; flex-direction: column; background: #fff; }
.head { display: flex; height: 134px; border-bottom: 2px solid #efede6; background: #f8f7f3; padding-left: 28px; }
.head > div { flex: none; width: 2100px; }
h1 { margin-top: 18px; line-height: 58px; font-size: 48px; font-weight: 400; color: #2457ae; letter-spacing: .2px; }
.head p { margin-top: 7px; line-height: 32px; font-size: 24.300px; color: #858585; }
button { font-family: Lato, sans-serif; border: 0; text-align: left; }
.new { flex: none; width: 328px; height: 70px; margin-top: 30px; padding-left: 65px; background: #499d44; color: #fff; font-size: 31px; font-weight: 500; }
.filters { display: flex; align-items: flex-start; height: 120px; }
.search { flex: none; display: flex; width: 540px; height: 66px; margin-left: 28px; padding: 16px 12px 0 15px; justify-content: space-between; color: #cfcfcf; font-size: 26px; line-height: 42px; letter-spacing: .25px; background: linear-gradient(#d7d7d7, #d7d7d7) 0 100%/2px 15px no-repeat, linear-gradient(#d7d7d7, #d7d7d7) 100% 100%/2px 15px no-repeat, linear-gradient(#d7d7d7, #d7d7d7) 0 100%/100% 2px no-repeat; }
.search svg { margin-top: 12px; }
.opts { flex: none; display: grid; grid-template-columns: 101px 61px 41px 26px 98px 85px 41px 25px 87px 283px 42px 28px 80px; align-items: center; height: 42px; margin: 20px 0 0 849px; font-size: 26px; letter-spacing: .1px; color: #505050; }
.opts .v { position: relative; top: 1px; }
.opts .view { color: #333; }
.car { border: 7px solid transparent; border-top: 6px solid #cecece; border-bottom: 0; width: 14px; }
.sep { width: 2px; height: 20px; background: #ccc; }
.empty { display: flex; flex-direction: column; align-items: center; height: 844px; padding-top: 263px; width: 2540px; }
.empty { width: 2542px; align-self: flex-start; margin-left: -1px; }
.empty > svg { margin-right: 4px; }
.empty p { margin-top: 21px; line-height: 36px; font-size: 26px; letter-spacing: .11px; color: #858585; }
.empty a { display: flex; gap: 11px; margin: 18px 8px 0 0; font-size: 26px; line-height: 38px; font-weight: 700; color: #4b9a62; }
.empty { width: 2541px; }
.foot { flex: 1; border-top: 2px solid #efede6; background: #f8f7f3; }
.open { display: block; width: 328px; height: 70px; margin: 32px 0 0 2128px; padding-left: 54px; background: #d9d9d9; color: #f1f1f1; font-size: 32px; font-weight: 500; }
.acts { display: flex; align-items: center; height: 40px; margin: 33px 0 0 1552px; font-size: 22.500px; font-weight: 600; color: #dcdcdb; }
.acts span { flex: none; position: relative; top: 1px; }
.acts .b1 { top: 0; }
.b1 { width: 202px; margin-left: 11px; }
.b2 { width: 175px; margin-left: 10px; }
.b3 { width: 109px; margin-left: 12px; }
.b4 { width: 143px; margin-left: 10px; }

.downloads { display: flex; align-items: center; flex: 1; border-top: 2px solid #b5b5b5; background: linear-gradient(#f2f2f2, #eee); }
.downloads > * { flex: none; }
.downloads svg { margin-left: 35px; }
.file { width: 334px; margin-left: 35px; font-size: 24px; font-weight: 500; color: #000; }
.dots { display: flex; gap: 3px; width: 58px; }
.dots i { width: 6px; height: 6px; border-radius: 50%; background: #555; }
.vbar { width: 2px; height: 56px; background: #aaa; }
.showall { width: 240px; height: 56px; margin-left: 2129px; padding-left: 31px; border: 2px solid #b1b1b1; border-radius: 6px; background: #fff; font: 500 24px Inter, sans-serif; color: #6a6a6a; }
```
